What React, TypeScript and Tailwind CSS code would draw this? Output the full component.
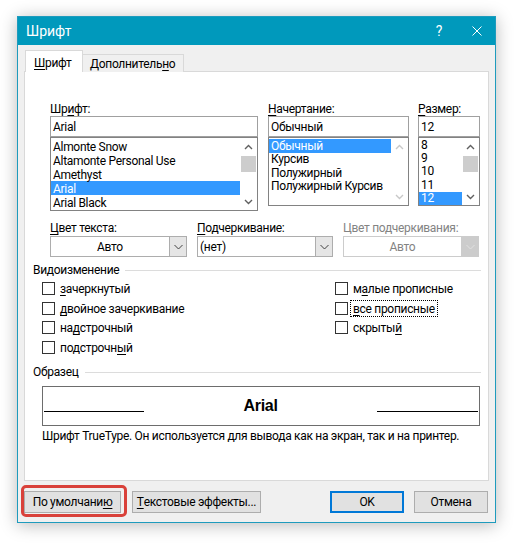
import React from "react";

const U = ({ c }: { c: string }) => (
  <span className="underline decoration-1 underline-offset-[2px]">{c}</span>
);

const Chev = ({ dir, color }: { dir: "up" | "down"; color: string }) => (
  <svg width="9" height="6" viewBox="0 0 9 6">
    <polyline
      points={dir === "up" ? "1,5 4.5,1.5 8,5" : "1,1 4.5,4.5 8,1"}
      fill="none"
      stroke={color}
      strokeWidth="1.4"
    />
  </svg>
);

const ComboChev = ({ color }: { color: string }) => (
  <svg width="9" height="6" viewBox="0 0 9 6">
    <polyline points="0.5,1 4.5,5 8.5,1" fill="none" stroke={color} strokeWidth="1" />
  </svg>
);

function VScroll({ disabled, thumb }: { disabled?: boolean; thumb?: boolean }) {
  const c = disabled ? "#c8c8c8" : "#606060";
  return (
    <div className="w-[17px] h-full flex flex-col bg-white shrink-0">
      <div className="h-[17px] flex items-center justify-center">
        <Chev dir="up" color={c} />
      </div>
      {thumb && <div className="mt-[1px] h-[16px] mx-[1px] bg-[#cdcdcd]" />}
      <div className="flex-1" />
      <div className="h-[17px] flex items-center justify-center">
        <Chev dir="down" color={c} />
      </div>
    </div>
  );
}

function ListBox({
  items,
  selected,
  rowH,
  h,
  pt,
  disabled,
  thumb,
}: {
  items: string[];
  selected: number;
  rowH: string;
  h: string;
  pt: string;
  disabled?: boolean;
  thumb?: boolean;
}) {
  return (
    <div className={`border border-[#828282] bg-white flex ${h}`}>
      <div className={`flex-1 ${pt} overflow-hidden`}>
        {items.map((t, i) => (
          <div
            key={t}
            className={`${rowH} pl-[2px] pt-[1px] flex items-center whitespace-nowrap ${
              i === selected ? "bg-[#3399ff] text-white" : "text-black"
            }`}
          >
            {t}
          </div>
        ))}
      </div>
      <VScroll disabled={disabled} thumb={thumb} />
    </div>
  );
}

function Combo({
  w,
  text,
  center,
  disabled,
}: {
  w: string;
  text: string;
  center?: boolean;
  disabled?: boolean;
}) {
  return (
    <div
      className={`${w} h-[21px] flex border ${
        disabled ? "border-[#cccccc] bg-white" : "border-[#adadad] bg-white"
      }`}
    >
      <div
        className={`flex-1 flex items-center px-[2px] ${center ? "justify-center" : ""} ${
          disabled ? "text-[#838383]" : "text-black"
        }`}
      >
        {text}
      </div>
      <div
        className={`w-[17px] flex items-center justify-center border-l ${
          disabled ? "bg-[#cccccc] border-[#cccccc]" : "bg-[#e5e5e5] border-[#adadad]"
        }`}
      >
        <ComboChev color={disabled ? "#e0e0e0" : "#404040"} />
      </div>
    </div>
  );
}

function Check({ label, focus }: { label: React.ReactNode; focus?: boolean }) {
  return (
    <div className="h-[19.5px] flex items-center">
      <div className="w-[13px] h-[13px] border border-[#333333] bg-white shrink-0" />
      <div
        className={`ml-[3px] px-[2px] h-[15px] pt-[1px] flex items-center ${
          focus ? "outline outline-1 outline-dotted outline-black" : ""
        }`}
      >
        {label}
      </div>
    </div>
  );
}

function Section({ title }: { title: string }) {
  return (
    <div className="flex items-center h-[16px] pl-[8px] pr-[7px]">
      <span>{title}</span>
      <div className="flex-1 ml-[6px] h-[1px] bg-[#dcdcdc]" />
    </div>
  );
}

function Btn({
  children,
  w,
  def,
}: {
  children: React.ReactNode;
  w: string;
  def?: boolean;
}) {
  return (
    <div
      className={`${w} h-[22px] flex items-center justify-center bg-[#e1e1e1] ${
        def ? "border-2 border-[#0078d7]" : "border border-[#adadad]"
      }`}
    >
      {children}
    </div>
  );
}

export default function App() {
  return (
    <div className="w-[517px] h-[545px] bg-white pt-[16px] pl-[17px] font-['Roboto','Noto_Sans',sans-serif] text-[12px] leading-[16px] tracking-[-0.3px] text-black overflow-hidden">
      <div className="w-[479px] h-[507px] border border-[#1e9bbd] bg-[#f0f0f0] shadow-[0_2px_16px_rgba(0,0,0,0.28)] flex flex-col">
        {/* Title bar */}
        <div className="h-[28px] bg-[#0099bc] flex items-center text-white shrink-0">
          <span className="pl-[8px] text-[14px] tracking-normal flex-1">Шрифт</span>
          <span className="text-[14px] mr-[30px]">?</span>
          <svg width="10" height="10" viewBox="0 0 10 10" className="mr-[13px]">
            <path d="M0.5 0.5 L9.5 9.5 M9.5 0.5 L0.5 9.5" stroke="white" strokeWidth="1" />
          </svg>
        </div>

        <div className="flex-1 px-[6px] pt-[6px]">
          {/* Tabs */}
          <div className="flex items-end h-[21px] pl-[1px] relative z-10">
            <div className="w-[58px] h-[22px] pl-[8px] bg-white border border-b-0 border-[#d9d9d9] flex items-center pt-[2px]">
              <U c="Ш" />рифт
            </div>
            <div className="w-[101px] h-[18px] pl-[7px] bg-[#f0f0f0] border border-l-0 border-b-0 border-[#d9d9d9] flex items-center pt-[1px]">
              Дополнитель
              <U c="н" />о
            </div>
          </div>

          {/* Panel */}
          <div className="h-[410px] bg-white border border-[#d9d9d9] -mt-[1px] pt-[28px]">
            <div className="flex items-start pl-[25px] gap-[10px]">
              <div className="w-[208px]">
                <div className="h-[16px] pt-[1px]">
                  Шр<U c="и" />фт:
                </div>
                <div className="h-[21px] border border-[#a0a0a0] flex items-center px-[2px]">Arial</div>
                <ListBox
                  items={["Almonte Snow", "Altamonte Personal Use", "Amethyst", "Arial", "Arial Black"]}
                  selected={3}
                  rowH="h-[14px] leading-[14px]"
                  h="h-[74px]"
                  pt="pt-[1px]"
                  thumb
                />
              </div>
              <div className="w-[141px]">
                <div className="h-[16px] pt-[1px]">
                  <U c="Н" />ачертание:
                </div>
                <div className="h-[21px] border border-[#a0a0a0] flex items-center px-[2px]">Обычный</div>
                <ListBox
                  items={["Обычный", "Курсив", "Полужирный", "Полужирный Курсив"]}
                  selected={0}
                  rowH="h-[13.5px] leading-[13.5px]"
                  h="h-[69px]"
                  pt="pt-[1px]"
                  disabled
                />
              </div>
              <div className="w-[62px] -ml-[1px]">
                <div className="h-[16px] pt-[1px]">
                  <U c="Р" />азмер:
                </div>
                <div className="h-[21px] border border-[#a0a0a0] flex items-center px-[2px]">12</div>
                <ListBox
                  items={["8", "9", "10", "11", "12"]}
                  selected={4}
                  rowH="h-[13.4px] leading-[13.4px]"
                  h="h-[69px]"
                  pt="pt-0"
                  thumb
                />
              </div>
            </div>

            {/* Row 2 */}
            <div className="flex pl-[25px] gap-[10px] mt-[8px]">
              <div className="w-[137px]">
                <div className="h-[17px] pt-[1px]">
                  <U c="Ц" />вет текста:
                </div>
                <Combo w="w-[137px]" text="Авто" center />
              </div>
              <div className="w-[136px]">
                <div className="h-[17px] pt-[1px]">
                  <U c="П" />одчеркивание:
                </div>
                <Combo w="w-[136px]" text="(нет)" />
              </div>
              <div className="w-[136px]">
                <div className="h-[17px] pt-[1px] text-[#838383]">Цвет подчеркивания:</div>
                <Combo w="w-[136px]" text="Авто" center disabled />
              </div>
            </div>

            {/* Видоизменение */}
            <div className="mt-[5px]">
              <Section title="Видоизменение" />
            </div>
            <div className="flex mt-[1px] pl-[17px]">
              <div className="w-[293px]">
                <Check label={<><U c="з" />ачеркнутый</>} />
                <Check label={<><U c="д" />войное зачеркивание</>} />
                <Check label={<>на<U c="д" />строчный</>} />
                <Check label={<>подстрочн<U c="ы" />й</>} />
              </div>
              <div>
                <Check label={<>м<U c="а" />лые прописные</>} />
                <Check label={<><U c="в" />се прописные</>} focus />
                <Check label={<>скрыты<U c="й" /></>} />
              </div>
            </div>

            {/* Образец */}
            <div className="mt-[7px]">
              <Section title="Образец" />
            </div>
            <div className="ml-[17px] mt-[6px] w-[438px] h-[40px] border border-[#6d6d6d] flex items-end pb-[13px] px-[1px]">
              <div className="w-[100px] h-[1px] bg-black" />
              <div className="flex-1 flex justify-center">
                <span className="font-['Liberation_Sans',Arial,sans-serif] font-bold text-[16px] leading-[16px] tracking-[-0.3px] -mb-[2px]">
                  Arial
                </span>
              </div>
              <div className="w-[101px] h-[1px] bg-black" />
            </div>
            <div className="ml-[17px] mt-[2px] h-[16px] whitespace-nowrap">
              Шрифт TrueType. Он используется для вывода как на экран, так и на принтер.
            </div>
          </div>

          {/* Buttons */}
          <div className="flex mt-[10px] items-center">
            <div className="relative">
              <Btn w="w-[97px]">
                По умолчани<U c="ю" />
              </Btn>
              <div className="absolute -left-[3px] -top-[6px] -right-[6px] -bottom-[4px] border-[3px] border-[#d9413a] rounded-[5px]" />
            </div>
            <div className="ml-[11px]">
              <Btn w="w-[129px]">
                <U c="Т" />екстовые эффекты...
              </Btn>
            </div>
            <div className="ml-[69px]">
              <Btn w="w-[74px]" def>
                OK
              </Btn>
            </div>
            <div className="ml-[10px]">
              <Btn w="w-[74px]">Отмена</Btn>
            </div>
          </div>
        </div>
      </div>
    </div>
  );
}
